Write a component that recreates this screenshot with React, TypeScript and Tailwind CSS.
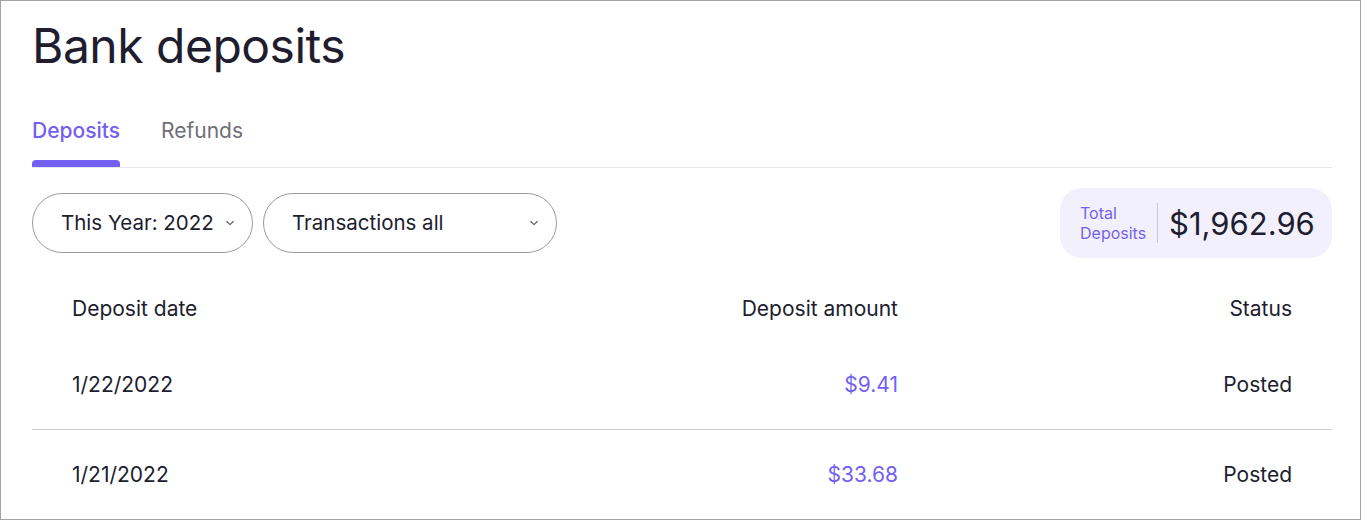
import React from 'react';

const Chevron = () => (
  <svg width="12" height="12" viewBox="0 0 12 12" fill="none" className="text-[#5f5d6b]">
    <path d="M2.8 4.5l3.2 3.2 3.2-3.2" stroke="currentColor" strokeWidth="1.2" strokeLinecap="round" strokeLinejoin="round" />
  </svg>
);

const rows = [
  { date: '1/22/2022', amount: '$9.41', status: 'Posted' },
  { date: '1/21/2022', amount: '$33.68', status: 'Posted' },
];

const App = () => {
  return (
    <div
      className="w-[1361px] h-[520px] overflow-hidden border border-[#a3a3a3] bg-white text-[#201d2e]"
      style={{ fontFamily: 'Inter, "Noto Sans", sans-serif' }}
    >
      <div className="pl-[31px] pr-[28px]">
        <h1 className="text-[48px] leading-none pt-[21px] tracking-[-0.5px]">Bank deposits</h1>

        <div className="mt-[49px] flex gap-[41px] border-b border-[#e8e8ec] text-[21px]">
          <div className="flex flex-col">
            <span className="text-[#7360f2] font-medium leading-none pt-[1px]">Deposits</span>
            <span className="mt-[19px] h-[7px] rounded-t-[4px] bg-[#7360f2]" />
          </div>
          <span className="text-[#706e79] leading-none pt-[1px]">Refunds</span>
        </div>

        <div className="mt-[20px] flex items-center">
          <button className="h-[60px] w-[221px] rounded-full border border-[#9b9aa1] pl-[28px] pr-[16px] flex items-center justify-between text-[20.5px]">
            <span>This Year: 2022</span>
            <Chevron />
          </button>
          <button className="ml-[10px] h-[60px] w-[294px] rounded-full border border-[#9b9aa1] pl-[28px] pr-[16px] flex items-center justify-between text-[20.5px]">
            <span>Transactions all</span>
            <Chevron />
          </button>
          <div className="ml-auto h-[70px] w-[272px] rounded-[22px] bg-[#f3f0fe] flex items-center pl-[20px]">
            <div className="text-[16px] leading-[20px] text-[#7360f2]">
              Total
              <br />
              Deposits
            </div>
            <div className="mx-[11px] h-[40px] w-px bg-[#c9c0f6]" />
            <div className="text-[31px] leading-none">$1,962.96</div>
          </div>
        </div>

        <div className="mt-[20px] text-[21px]">
          <div className="grid grid-cols-[413px_413px_1fr] px-[40px] h-[62px] items-center">
            <span>Deposit date</span>
            <span className="text-right">Deposit amount</span>
            <span className="text-right">Status</span>
          </div>
          {rows.map((r, i) => (
            <div
              key={r.date}
              className={
                'grid grid-cols-[413px_413px_1fr] px-[40px] h-[90px] items-center ' +
                (i === 0 ? 'border-b border-[#d0d0d4]' : '')
              }
            >
              <span>{r.date}</span>
              <span className="text-right text-[#7360f2]">{r.amount}</span>
              <span className="text-right">{r.status}</span>
            </div>
          ))}
        </div>
      </div>
    </div>
  );
};

export default App;
